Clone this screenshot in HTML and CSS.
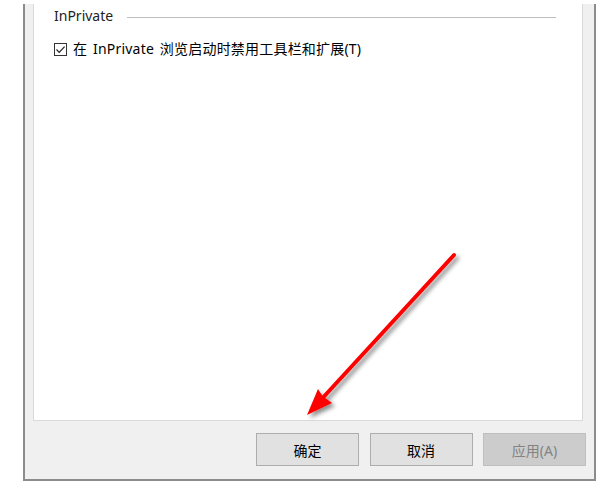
FILE: index.html
```html
<!DOCTYPE html>
<html lang="zh-CN">
<head>
<meta charset="utf-8">
<title>InPrivate</title>
<link rel="stylesheet" href="styles.css">
</head>
<body>
<div class="dialog">
  <div class="panel">
    <div class="group-head">
      <span class="group-title">InPrivate</span>
      <span class="group-line"></span>
    </div>
    <label class="check-row">
      <span class="checkbox">
        <svg viewBox="0 0 13 13" width="13" height="13"><path d="M2.5 6.5 L5.2 9.3 L10.6 3.6" fill="none" stroke="#222" stroke-width="1.2"/></svg>
      </span>
      <span class="check-text">在 InPrivate 浏览启动时禁用工具栏和扩展(T)</span>
    </label>
  </div>
  <div class="footer">
    <button class="btn">确定</button>
    <button class="btn">取消</button>
    <button class="btn btn-disabled" disabled>应用(A)</button>
  </div>
</div>
<svg class="arrow" width="599" height="483" viewBox="0 0 599 483">
  <defs>
    <filter id="sh" x="-20%" y="-20%" width="140%" height="140%">
      <feDropShadow dx="3" dy="3" stdDeviation="2.2" flood-color="#000" flood-opacity="0.45"/>
    </filter>
  </defs>
  <g filter="url(#sh)">
    <line x1="454" y1="255" x2="318" y2="403" stroke="#ff0000" stroke-width="4" stroke-linecap="round"/>
    <polygon points="307,415 332,403 322.5,396 318,389" fill="#ff0000"/>
  </g>
</svg>
</body>
</html>
```
FILE: styles.css
```css
html, body {
  margin: 0;
  padding: 0;
  background: #ffffff;
}
body {
  width: 599px;
  height: 483px;
  position: relative;
  overflow: hidden;
  font-family: "Noto Sans", "Noto Sans CJK SC", sans-serif;
  font-size: 14px;
  color: #000;
}
.dialog {
  box-sizing: border-box;
  margin: 4px 0 0 23px;
  width: 573px;
  height: 477px;
  background: #f0f0f0;
  border-left: 2px solid #8c8c8c;
  border-right: 2px solid #8c8c8c;
  border-bottom: 2px solid #8c8c8c;
  display: flex;
  flex-direction: column;
}
.panel {
  box-sizing: border-box;
  margin-left: 8px;
  width: 550px;
  height: 417px;
  background: #ffffff;
  border: 1px solid #dadada;
  border-top: none;
  padding: 0 0 0 20px;
}
.group-head {
  display: flex;
  align-items: center;
  height: 24px;
}
.group-title {
  color: #222;
  line-height: 24px;
}
.group-line {
  margin-left: 14px;
  width: 429px;
  border-top: 1px solid #bdbdbd;
  margin-top: 2px;
}
.check-row {
  display: flex;
  align-items: center;
  margin-top: 11px;
  height: 20px;
}
.checkbox {
  box-sizing: border-box;
  width: 13px;
  height: 13px;
  border: 1px solid #333;
  background: #fff;
  position: relative;
  flex: none;
}
.checkbox svg {
  position: absolute;
  left: -1px;
  top: -1px;
}
.check-text {
  margin-left: 6px;
  line-height: 20px;
  word-spacing: 2px;
  letter-spacing: 0.2px;
}
.footer {
  display: flex;
  justify-content: flex-end;
  gap: 10.5px;
  padding: 12px 8px 0 0;
}
.btn {
  box-sizing: border-box;
  width: 103px;
  height: 33px;
  background: #e1e1e1;
  border: 1px solid #adadad;
  font-family: "Noto Sans", "Noto Sans CJK SC", sans-serif;
  font-size: 14px;
  color: #000;
  padding: 0;
  margin: 0;
}
.btn-disabled {
  background: #cccccc;
  border-color: #bfbfbf;
  color: #838383;
}
.arrow {
  position: absolute;
  left: 0;
  top: 0;
  pointer-events: none;
}
```
